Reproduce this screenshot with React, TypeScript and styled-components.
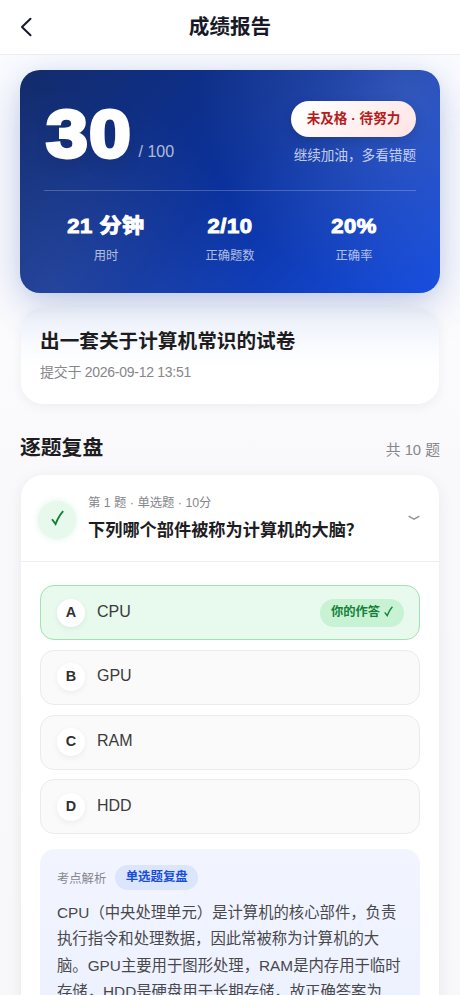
import React from "react";
import styled, { createGlobalStyle } from "styled-components";

const Global = createGlobalStyle`
  *, *::before, *::after { box-sizing: border-box; }
  body {
    margin: 0;
    background: #f9f9fb;
    color: #1d1d1f;
    font-family: "Liberation Sans", "Noto Sans CJK SC", sans-serif;
  }
`;

const Screen = styled.div`
  width: 460px;
  height: 995px;
  overflow: hidden;
  background: linear-gradient(180deg, #fbfcff 0, #fcfcfe 300px, #f9f9fb 480px, #f8f8fa 100%);
`;

const Header = styled.header`
  display: grid;
  grid-template-columns: 60px 1fr 60px;
  align-items: center;
  height: 54px;
  position: relative;
  z-index: 2;
  background: #fff;
  box-shadow: 0 1px 0 #ebedf2;
`;

const BackButton = styled.button`
  display: flex;
  height: 54px;
  padding: 0 0 0 20px;
  align-items: center;
  border: 0;
  background: none;
  color: #171928;
`;

const Title = styled.h1`
  margin: 0;
  text-align: center;
  font-size: 20.6px;
  line-height: 30px;
  font-weight: 700;
  color: #171928;
`;

const Content = styled.main`
  padding: 15.5px 20px 0;
`;

const ScoreCard = styled.section`
  height: 223px;
  padding: 24px;
  border-radius: 20px;
  color: #fff;
  background:
    radial-gradient(circle at 92% 8%, rgba(255, 255, 255, 0.15), rgba(255, 255, 255, 0) 48%),
    radial-gradient(circle at 8% 100%, rgba(255, 255, 255, 0.1), rgba(255, 255, 255, 0) 46%),
    linear-gradient(135deg, #142c6b 0%, #0a319c 50%, #174ee0 100%);
  box-shadow: 0 12px 44px rgba(24, 62, 165, 0.26), 0 3px 14px rgba(24, 50, 110, 0.05);
`;

const ScoreTop = styled.div`
  display: flex;
  justify-content: space-between;
  height: 97px;
  border-bottom: 1px solid rgba(255, 255, 255, 0.22);
`;

const ScoreLine = styled.div`
  display: flex;
  align-items: baseline;
  height: 80px;
`;

const ScoreValue = styled.span`
  display: inline-block;
  width: 90px;
  padding-left: 2px;
  font-size: 67px;
  line-height: 80px;
  font-weight: 700;
  letter-spacing: 1.5px;
  transform: scaleX(1.11);
  transform-origin: left;
  -webkit-text-stroke: 3.8px #fff;
  text-shadow: 0 5px 18px rgba(0, 0, 0, 0.14);
`;

const ScoreTotal = styled.span`
  margin-left: 4.5px;
  font-size: 16px;
  color: rgba(255, 255, 255, 0.68);
`;

const Verdict = styled.div`
  display: flex;
  flex-direction: column;
  align-items: flex-end;
  padding-top: 7.5px;
`;

const VerdictPill = styled.div`
  width: 125px;
  height: 36px;
  border-radius: 18px;
  text-align: center;
  white-space: nowrap;
  font-size: 13.6px;
  line-height: 35px;
  font-weight: 700;
  color: #b71c1c;
  background: linear-gradient(135deg, #fff 10%, #ffe3e3 100%);
  box-shadow: 0 4px 12px rgba(0, 0, 0, 0.14);
`;

const VerdictHint = styled.div`
  margin-top: 7.5px;
  font-size: 13.6px;
  line-height: 21px;
  color: rgba(255, 255, 255, 0.74);
`;

const Stats = styled.div`
  display: grid;
  grid-template-columns: repeat(3, 1fr);
  padding-top: 20px;
  text-align: center;
`;

const StatValue = styled.div`
  font-size: 20.4px;
  line-height: 30px;
  font-weight: 700;
  letter-spacing: 0.5px;
  transform: scaleX(1.08);
  -webkit-text-stroke: 1px #fff;
`;

const StatLabel = styled.div`
  margin-top: 6px;
  font-size: 12.3px;
  line-height: 18px;
  color: rgba(255, 255, 255, 0.68);
`;

const PaperCard = styled.section`
  height: 96px;
  margin: 15.5px 1px 0;
  padding: 19px 19px 0;
  border-radius: 22px;
  background: linear-gradient(180deg, #dfe5f1 0, #edf1f9 12px, #f8faff 35px, #fff 58px);
  position: relative;
  box-shadow: 0 3px 12px rgba(0, 0, 0, 0.055);
`;

const PaperTitle = styled.h2`
  margin: 0;
  font-size: 19.65px;
  line-height: 29px;
  font-weight: 700;
`;

const PaperMeta = styled.div`
  margin-top: 6px;
  font-size: 14px;
  line-height: 20px;
  letter-spacing: -0.27px;
  color: #86868b;
`;

const SectionHead = styled.div`
  display: flex;
  justify-content: space-between;
  align-items: center;
  height: 32px;
  margin-top: 28px;
`;

const SectionTitle = styled.h2`
  margin: 0;
  font-size: 20.8px;
  line-height: 34px;
  font-weight: 700;
`;

const SectionCount = styled.span`
  font-size: 14.8px;
  color: #86868b;
`;

const QuestionCard = styled.section`
  height: 700px;
  margin: 11px 1px 0;
  border-radius: 22px;
  background: #fff;
  box-shadow: 0 3px 16px rgba(20, 20, 40, 0.065);
`;

const QuestionHead = styled.div`
  display: flex;
  align-items: center;
  height: 87px;
  padding: 2px 19px 0 17px;
  border-bottom: 1px solid #ededef;
`;

const ResultBadge = styled.div`
  display: flex;
  align-items: center;
  justify-content: center;
  flex: none;
  width: 38px;
  height: 38px;
  padding-bottom: 4px;
  margin-top: 2px;
  border-radius: 50%;
  color: #168033;
  background: #e7f8ed;
  box-shadow: 0 0 7px rgba(52, 211, 110, 0.16);
`;

const QuestionText = styled.div`
  flex: 1;
  margin-left: 12px;
  white-space: nowrap;
`;

const QuestionMeta = styled.div`
  margin-top: -1px;
  font-size: 12.35px;
  line-height: 18px;
  color: #86868b;
`;

const QuestionTitle = styled.h3`
  margin: 5px 0 0;
  font-size: 17.2px;
  line-height: 26px;
  font-weight: 700;
`;

const ChevronSlot = styled.span`
  display: flex;
  margin-top: -2px;
  color: #929297;
`;

const Options = styled.div`
  display: flex;
  flex-direction: column;
  gap: 9.8px;
  padding: 23px 19px 0;
`;

const Option = styled.div<{ $correct?: boolean }>`
  display: flex;
  align-items: center;
  height: 55px;
  padding: 0 15px 0 16px;
  border: 1px solid ${(p) => (p.$correct ? "#a1e2b1" : "#ebebed")};
  border-radius: 14px;
  background: ${(p) => (p.$correct ? "#e8f9ee" : "#fafafa")};
`;

const OptionKey = styled.span`
  width: 28px;
  height: 28px;
  border-radius: 50%;
  text-align: center;
  font-size: 14.4px;
  line-height: 27px;
  font-weight: 700;
  color: #303033;
  background: #fff;
  box-shadow: 0 2px 6px rgba(0, 0, 0, 0.06);
`;

const OptionLabel = styled.span`
  flex: 1;
  margin: -2px 0 0 12px;
  font-size: 16px;
  color: #3a3a3d;
`;

const AnswerPill = styled.span`
  display: flex;
  align-items: center;
  justify-content: center;
  gap: 4px;
  width: 84px;
  height: 28px;
  padding-bottom: 3px;
  border-radius: 14px;
  white-space: nowrap;
  font-size: 12.3px;
  font-weight: 700;
  color: #168039;
  background: #c8f2d4;
`;

const Analysis = styled.div`
  height: 230px;
  margin: 15px 19px 0;
  padding: 16px 15px 0 17px;
  border-radius: 15px;
  background: linear-gradient(180deg, #f2f5ff 0, #ebf0ff 100%);
`;

const AnalysisHead = styled.div`
  display: flex;
  align-items: center;
  gap: 9px;
  height: 25px;
  font-size: 12.3px;
  color: #86868b;
`;

const AnalysisTag = styled.span`
  width: 83px;
  height: 25px;
  border-radius: 13px;
  text-align: center;
  font-size: 12.4px;
  line-height: 25px;
  font-weight: 700;
  color: #174dda;
  background: #dbe5fb;
`;

const AnalysisBody = styled.p`
  margin: 9.5px 0 0;
  white-space: pre;
  font-size: 15.35px;
  line-height: 26.5px;
  color: #48484b;
`;

const Check = ({ width, height, stroke }: { width: number; height: number; stroke: number }) => (
  <svg width={width} height={height} viewBox="0 0 13 16" fill="none" stroke="currentColor" strokeWidth={stroke}>
    <path d="M1 9.2 L4.6 14 C6.5 9.2 9 4.6 12.2 1.2" />
  </svg>
);

const stats = [
  { value: "21 分钟", label: "用时" },
  { value: "2/10", label: "正确题数" },
  { value: "20%", label: "正确率" },
];

const options = [
  { key: "A", label: "CPU", chosen: true },
  { key: "B", label: "GPU" },
  { key: "C", label: "RAM" },
  { key: "D", label: "HDD" },
];

const explanation = [
  "CPU（中央处理单元）是计算机的核心部件，负责",
  "执行指令和处理数据，因此常被称为计算机的大",
  "脑。GPU主要用于图形处理，RAM是内存用于临时",
  "存储，HDD是硬盘用于长期存储，故正确答案为",
].join("\n");

export default function App() {
  return (
    <Screen>
      <Global />
      <Header>
        <BackButton aria-label="返回">
          <svg width="12" height="20" viewBox="0 0 12 20" fill="none" stroke="currentColor" strokeWidth="2" strokeLinecap="round" strokeLinejoin="round">
            <path d="M10.5 1.7 2 10l8.5 8.3" />
          </svg>
        </BackButton>
        <Title>成绩报告</Title>
      </Header>
      <Content>
        <ScoreCard>
          <ScoreTop>
            <ScoreLine>
              <ScoreValue>30</ScoreValue>
              <ScoreTotal>/ 100</ScoreTotal>
            </ScoreLine>
            <Verdict>
              <VerdictPill>未及格 · 待努力</VerdictPill>
              <VerdictHint>继续加油，多看错题</VerdictHint>
            </Verdict>
          </ScoreTop>
          <Stats>
            {stats.map((s) => (
              <div key={s.label}>
                <StatValue>{s.value}</StatValue>
                <StatLabel>{s.label}</StatLabel>
              </div>
            ))}
          </Stats>
        </ScoreCard>
        <PaperCard>
          <PaperTitle>出一套关于计算机常识的试卷</PaperTitle>
          <PaperMeta>提交于 2026-09-12 13:51</PaperMeta>
        </PaperCard>
        <SectionHead>
          <SectionTitle>逐题复盘</SectionTitle>
          <SectionCount>共 10 题</SectionCount>
        </SectionHead>
        <QuestionCard>
          <QuestionHead>
            <ResultBadge>
              <Check width={13} height={16} stroke={1.9} />
            </ResultBadge>
            <QuestionText>
              <QuestionMeta>第 1 题 · 单选题 · 10分</QuestionMeta>
              <QuestionTitle>下列哪个部件被称为计算机的大脑？</QuestionTitle>
            </QuestionText>
            <ChevronSlot>
              <svg width="12" height="6" viewBox="0 0 12 6" fill="none" stroke="currentColor" strokeWidth="1.5">
                <path d="M.7 1 C2.5 2.4 4.3 3.3 6 4.2 C7.7 3.3 9.5 2.4 11.3 1" />
              </svg>
            </ChevronSlot>
          </QuestionHead>
          <Options>
            {options.map((o) => (
              <Option key={o.key} $correct={o.chosen}>
                <OptionKey>{o.key}</OptionKey>
                <OptionLabel>{o.label}</OptionLabel>
                {o.chosen && (
                  <AnswerPill>
                    你的作答
                    <Check width={9} height={11} stroke={2} />
                  </AnswerPill>
                )}
              </Option>
            ))}
          </Options>
          <Analysis>
            <AnalysisHead>
              考点解析
              <AnalysisTag>单选题复盘</AnalysisTag>
            </AnalysisHead>
            <AnalysisBody>{explanation}</AnalysisBody>
          </Analysis>
        </QuestionCard>
      </Content>
    </Screen>
  );
}
